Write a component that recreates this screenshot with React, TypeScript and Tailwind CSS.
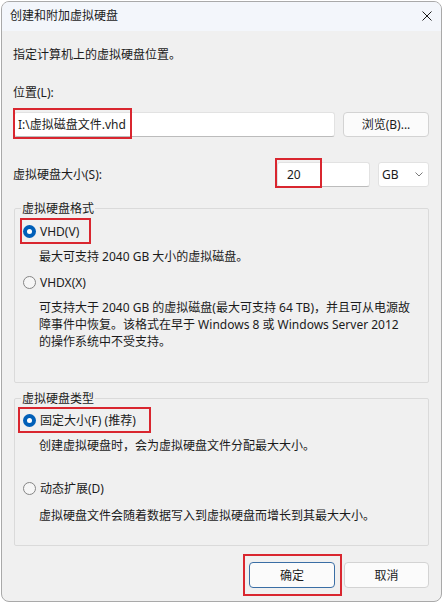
import React from "react";

function Radio({ checked }: { checked: boolean }) {
  return checked ? (
    <span className="w-[13px] h-[13px] rounded-full bg-[#005fb8] flex items-center justify-center shrink-0">
      <span className="w-[5px] h-[5px] rounded-full bg-white" />
    </span>
  ) : (
    <span className="w-[13px] h-[13px] rounded-full border border-[#858585] bg-[#f6f6f6] shrink-0" />
  );
}

export default function App() {
  return (
    <div className="w-[443px] h-[604px] bg-white overflow-hidden font-['Noto_Sans','Noto_Sans_CJK_SC',sans-serif] text-[12px] leading-[17px] text-[#1b1b1b]">
      <div className="ml-[1px] mt-[1px] w-[441px] h-[601px] rounded-[8px] border border-[#a9a9a9] bg-[#f0f0f0] overflow-hidden flex flex-col">
        {/* title bar */}
        <div className="h-[29px] shrink-0 bg-[#f3f6fb] flex items-center justify-between pl-[8px] pr-[9px] pb-[2px]">
          <span>创建和附加虚拟硬盘</span>
          <svg width="10" height="10" viewBox="0 0 10 10">
            <path d="M0.5 0.5L9.5 9.5M9.5 0.5L0.5 9.5" stroke="#1b1b1b" strokeWidth="1" />
          </svg>
        </div>

        {/* body */}
        <div className="flex flex-col pl-[11px] pr-[12px]">
          <div className="mt-[15px]">指定计算机上的虚拟硬盘位置。</div>
          <div className="mt-[21px]">位置(L):</div>

          <div className="mt-[11px] flex items-center gap-[8px]">
            <div className="relative ml-[1px] w-[321px] h-[25px] bg-white border border-[#e2e2e2] border-b-[#bcbcbc] rounded-[3px] flex items-center pl-[3px]">
              <span>{"I:\\虚拟磁盘文件.vhd"}</span>
              <span className="absolute left-[-2px] top-[-5px] w-[119px] h-[31px] border-2 border-[#d9262f]" />
            </div>
            <div className="w-[86px] h-[25px] bg-[#fbfbfb] border border-[#d3d3d3] rounded-[4px] flex items-center justify-center">
              浏览(B)...
            </div>
          </div>

          <div className="mt-[25px] flex items-center">
            <span>虚拟硬盘大小(S):</span>
            <div className="ml-auto flex items-center gap-[8px]">
              <div className="relative w-[93px] h-[25px] bg-white border border-[#e2e2e2] border-b-[#bcbcbc] rounded-[3px] flex items-center pl-[9px]">
                <span>20</span>
                <span className="absolute left-[-3px] top-[-5px] w-[47px] h-[30px] border-2 border-[#d9262f]" />
              </div>
              <div className="w-[51px] h-[25px] bg-white border border-[#e2e2e2] rounded-[3px] flex items-center justify-between pl-[3px] pr-[5px]">
                <span>GB</span>
                <svg width="8" height="5" viewBox="0 0 8 5">
                  <path d="M0.5 0.5L4 4L7.5 0.5" fill="none" stroke="#7a7a7a" strokeWidth="1" />
                </svg>
              </div>
            </div>
          </div>

          {/* group 1 */}
          <div className="relative mt-[21px] ml-[1px] h-[175px] border border-[#dadada] rounded-[2px] flex flex-col pt-[9px]">
            <span className="absolute left-[6px] top-[-9px] px-[1px] bg-[#f0f0f0]">虚拟硬盘格式</span>
            <div className="relative ml-[8px] h-[26px] flex items-center">
              <Radio checked />
              <span className="ml-[4px]">VHD(V)</span>
              <span className="absolute left-[-3px] top-0 w-[71px] h-[26px] border-2 border-[#d9262f]" />
            </div>
            <div className="mt-[4px] ml-[24px]">最大可支持 2040 GB 大小的虚拟磁盘。</div>
            <div className="mt-[4px] ml-[8px] h-[26px] flex items-center">
              <Radio checked={false} />
              <span className="ml-[4px]">VHDX(X)</span>
            </div>
            <div className="mt-[4px] ml-[24px] flex flex-col whitespace-nowrap">
              <span>可支持大于 2040 GB 的虚拟磁盘(最大可支持 64 TB)，并且可从电源故</span>
              <span>障事件中恢复。该格式在早于 Windows 8 或 Windows Server 2012</span>
              <span>的操作系统中不受支持。</span>
            </div>
          </div>

          {/* group 2 */}
          <div className="relative mt-[15px] ml-[1px] h-[148px] border border-[#dadada] rounded-[2px] flex flex-col pt-[8px]">
            <span className="absolute left-[6px] top-[-9px] px-[1px] bg-[#f0f0f0]">虚拟硬盘类型</span>
            <div className="relative ml-[8px] h-[26px] flex items-center">
              <Radio checked />
              <span className="ml-[4px]">固定大小(F) (推荐)</span>
              <span className="absolute left-[-5px] top-0 w-[133px] h-[26px] border-2 border-[#d9262f]" />
            </div>
            <div className="mt-[4px] ml-[24px]">创建虚拟硬盘时，会为虚拟硬盘文件分配最大大小。</div>
            <div className="mt-[21px] ml-[8px] h-[26px] flex items-center">
              <Radio checked={false} />
              <span className="ml-[4px]">动态扩展(D)</span>
            </div>
            <div className="mt-[6px] ml-[24px]">虚拟硬盘文件会随着数据写入到虚拟硬盘而增长到其最大大小。</div>
          </div>

          {/* buttons */}
          <div className="mt-[16px] flex justify-end gap-[9px]">
            <div className="relative w-[86px] h-[26px] bg-[#fbfbfb] border border-[#3a6ea5] rounded-[4px] flex items-center justify-center">
              确定
              <span className="absolute left-[-7px] top-[-9px] w-[99px] h-[42px] border-2 border-[#d9262f]" />
            </div>
            <div className="w-[85px] h-[26px] bg-[#fbfbfb] border border-[#d3d3d3] rounded-[4px] flex items-center justify-center">
              取消
            </div>
          </div>
        </div>
      </div>
    </div>
  );
}
